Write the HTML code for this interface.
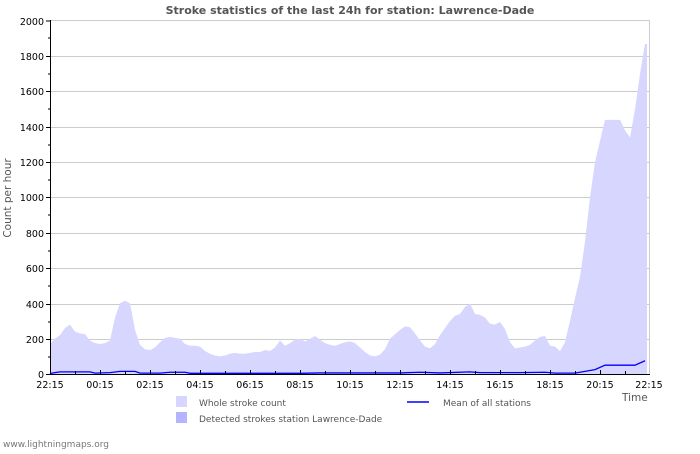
<!DOCTYPE html>
<html><head><meta charset="utf-8"><style>
body{margin:0;background:#fff;width:700px;height:450px;overflow:hidden;font-family:"DejaVu Sans","Liberation Sans",sans-serif}
</style></head><body>
<svg width="700" height="450" xmlns="http://www.w3.org/2000/svg" font-family="DejaVu Sans, Liberation Sans, sans-serif">
<text x="350" y="14" text-anchor="middle" font-size="11" font-weight="bold" fill="#555">Stroke statistics of the last 24h for station: Lawrence-Dade</text>
<rect x="50.5" y="20.5" width="599" height="354" fill="none" stroke="#ccc"/>
<g stroke="#ccc" stroke-width="1">
<line x1="50" y1="339.5" x2="650" y2="339.5"/><line x1="50" y1="304.5" x2="650" y2="304.5"/><line x1="50" y1="268.5" x2="650" y2="268.5"/><line x1="50" y1="233.5" x2="650" y2="233.5"/><line x1="50" y1="197.5" x2="650" y2="197.5"/><line x1="50" y1="162.5" x2="650" y2="162.5"/><line x1="50" y1="127.5" x2="650" y2="127.5"/><line x1="50" y1="91.5" x2="650" y2="91.5"/><line x1="50" y1="56.5" x2="650" y2="56.5"/>
</g>
<g transform="translate(0,374) scale(1,-0.1765)">
<polygon fill="#d6d6ff" points="50,0 50,170 55,200 60,220 65,260 70,280 75,240 80,230 85,225 90,190 95,175 100,170 105,175 110,190 115,320 120,400 125,415 130,400 135,250 140,165 145,140 150,135 155,150 160,180 165,205 170,210 175,205 180,200 185,170 190,160 195,160 200,155 205,130 210,115 215,105 220,100 225,105 230,115 235,120 240,115 245,115 250,120 255,125 260,125 265,135 270,130 275,150 280,190 285,160 290,175 295,195 300,200 305,185 310,200 315,215 320,195 325,175 330,165 335,160 340,170 345,180 350,185 355,175 360,150 365,125 370,105 375,100 380,110 385,140 390,200 395,225 400,250 405,270 410,265 415,230 420,190 425,155 430,145 435,170 440,220 445,260 450,300 455,330 460,340 465,380 470,400 475,340 480,335 485,320 490,285 495,280 500,295 505,255 510,180 515,145 520,150 525,155 530,165 535,190 540,210 545,215 550,160 555,155 560,130 565,180 570,300 575,430 580,550 585,750 590,1000 595,1200 600,1320 605,1440 610,1440 615,1440 620,1440 625,1380 630,1340 635,1500 640,1700 645,1870 647,1870 647,0"/>
<polyline fill="none" stroke="#00f" stroke-width="1.3" vector-effect="non-scaling-stroke" points="50,3 55,8 60,12 90,12 95,5 110,8 120,15 135,15 140,5 160,5 170,10 185,10 190,4 300,4 320,6 400,6 420,10 440,6 470,12 480,8 520,8 545,10 555,5 575,5 585,15 595,25 605,50 625,50 635,50 645,75"/>
</g>
<g stroke="#000" stroke-width="1">
<line x1="46" y1="374.5" x2="50" y2="374.5"/><line x1="46" y1="339.5" x2="50" y2="339.5"/><line x1="46" y1="304.5" x2="50" y2="304.5"/><line x1="46" y1="268.5" x2="50" y2="268.5"/><line x1="46" y1="233.5" x2="50" y2="233.5"/><line x1="46" y1="197.5" x2="50" y2="197.5"/><line x1="46" y1="162.5" x2="50" y2="162.5"/><line x1="46" y1="127.5" x2="50" y2="127.5"/><line x1="46" y1="91.5" x2="50" y2="91.5"/><line x1="46" y1="56.5" x2="50" y2="56.5"/><line x1="46" y1="21" x2="50" y2="21"/>
<line x1="50.5" y1="20" x2="50.5" y2="375"/><line x1="50" y1="374.5" x2="650" y2="374.5"/>
</g>
<path stroke="#000" stroke-width="1" d="M48 357h2M48 322h2M48 286h2M48 251h2M48 215h2M48 180h2M48 145h2M48 109h2M48 74h2M48 38h2
M75.5 371v3M100.5 370v4M125.5 371v3M150.5 370v4M175.5 371v3M200.5 370v4M225.5 371v3M250.5 370v4M275.5 371v3M300.5 370v4M325.5 371v3M350.5 370v4M375.5 371v3M400.5 370v4M425.5 371v3M450.5 370v4M475.5 371v3M500.5 370v4M525.5 371v3M550.5 370v4M575.5 371v3M600.5 370v4M625.5 371v3"/>
<g font-size="9.5" fill="#000" text-anchor="end">
<text x="44" y="378">0</text><text x="44" y="343">200</text><text x="44" y="308">400</text><text x="44" y="272">600</text><text x="44" y="237">800</text><text x="44" y="201">1000</text><text x="44" y="166">1200</text><text x="44" y="131">1400</text><text x="44" y="95">1600</text><text x="44" y="60">1800</text><text x="44" y="25">2000</text>
</g>
<g font-size="9.5" fill="#000" text-anchor="middle">
<text x="50" y="388">22:15</text><text x="100" y="388">00:15</text><text x="150" y="388">02:15</text><text x="200" y="388">04:15</text><text x="250" y="388">06:15</text><text x="300" y="388">08:15</text><text x="350" y="388">10:15</text><text x="400" y="388">12:15</text><text x="450" y="388">14:15</text><text x="500" y="388">16:15</text><text x="550" y="388">18:15</text><text x="600" y="388">20:15</text><text x="649" y="388">22:15</text>
</g>
<text x="11" y="198" font-size="10.5" fill="#555" text-anchor="middle" transform="rotate(-90 11 198)">Count per hour</text>
<text x="622" y="401" font-size="10.5" fill="#555">Time</text>
<rect x="176" y="396" width="11" height="11" fill="#d6d6ff"/>
<rect x="176" y="412" width="11" height="11" fill="#b4b4ff"/>
<text x="199" y="406" font-size="9" fill="#555">Whole stroke count</text>
<text x="199" y="422" font-size="9" fill="#555">Detected strokes station Lawrence-Dade</text>
<line x1="407" y1="402" x2="429" y2="402" stroke="#00f" stroke-width="1.5"/>
<text x="443" y="406" font-size="9" fill="#555">Mean of all stations</text>
<text x="3" y="447" font-size="9" fill="#777">www.lightningmaps.org</text>
</svg>
</body></html>
